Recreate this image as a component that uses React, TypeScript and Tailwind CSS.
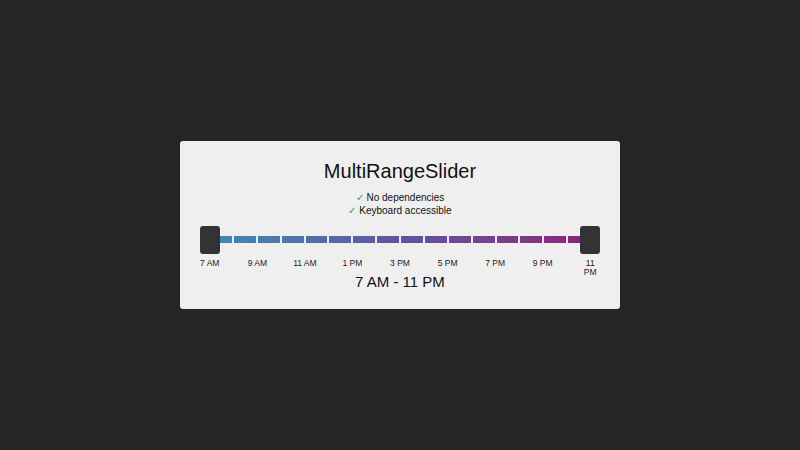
import React from "react";

const hours = Array.from({ length: 16 }, (_, i) => i);
const labels = ["7 AM", "9 AM", "11 AM", "1 PM", "3 PM", "5 PM", "7 PM", "9 PM", "11 PM"];

export default function App() {
  return (
    <div
      className="flex h-[450px] w-[800px] items-center justify-center bg-[#252526] text-[#111]"
      style={{ fontFamily: '"Liberation Sans", Arial, sans-serif' }}
    >
      <div className="flex h-[168px] w-[440px] flex-col items-center rounded-[3px] bg-[#efefef] pt-[18px]">
        <h1 className="text-[20px] leading-[24px]">MultiRangeSlider</h1>
        <ul className="mt-[8px] text-center text-[10px] leading-[13px]">
          <li>
            <span className="text-[#3c9a3c]">✓</span> No dependencies
          </li>
          <li>
            <span className="text-[#3c9a3c]">✓</span> Keyboard accessible
          </li>
        </ul>

        {/* slider: gradient track split into hourly segments, thumbs at both ends */}
        <div className="relative mt-[9px] h-[28px] w-[400px]">
          <div className="absolute left-[10px] right-[10px] top-[10px] flex h-[7px] bg-gradient-to-r from-[#368cb3] via-[#5d559e] to-[#8e1a7c]">
            {hours.map((h) => (
              <div key={h} className={`flex-1 ${h === 0 ? "" : "border-l-2 border-[#efefef]"}`} />
            ))}
          </div>
          <div className="absolute left-0 top-0 h-[28px] w-[20px] rounded-[3px] bg-[#333]" />
          <div className="absolute right-0 top-0 h-[28px] w-[20px] rounded-[3px] bg-[#333]" />
        </div>

        <div className="mt-[5px] grid h-[10px] w-[428px] grid-cols-9 text-center text-[8.5px] leading-[9px] text-[#1a1a1a]">
          {labels.map((l, i) => (
            <div key={l} className="flex justify-center">
              <span className={i === labels.length - 1 ? "inline-block w-[14px]" : ""}>{l}</span>
            </div>
          ))}
        </div>

        <div className="mt-[4px] text-[15px] leading-[18px]">7 AM - 11 PM</div>
      </div>
    </div>
  );
}
